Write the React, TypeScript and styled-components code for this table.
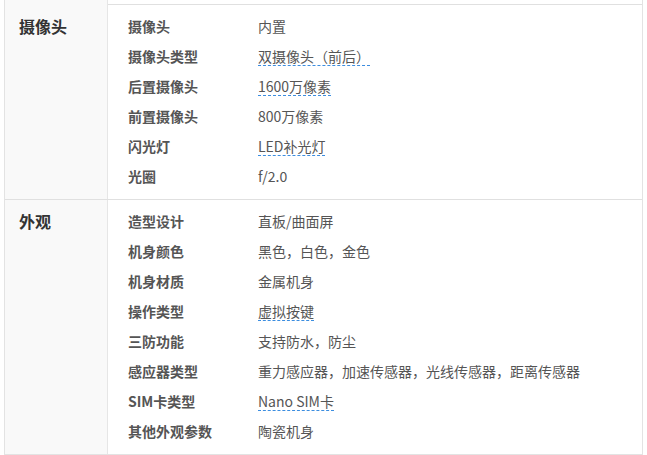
import React from 'react';
import styled, { createGlobalStyle } from 'styled-components';

interface ParamRow {
  label: string,
  value: string,
  tip?: boolean
}

interface ParamGroup {
  title: string,
  rows: ParamRow[]
}

const GlobalStyle = createGlobalStyle`
  html, body {
    margin: 0;
    padding: 0;
    background: #fff;
  }
  body {
    font-family: "Noto Sans CJK SC", "Noto Sans", "Liberation Sans", sans-serif;
  }
`

const Page = styled.div`
  width: 647px;
  height: 455px;
  overflow: hidden;
  padding-left: 4px;
  box-sizing: border-box;
`

const Table = styled.div`
  width: 639px;
  border-left: 1px solid #e3e3e3;
  border-right: 1px solid #e3e3e3;
  border-bottom: 1px solid #e3e3e3;
  box-sizing: border-box;
`

const Section = styled.div<{ $stub?: boolean }>`
  display: grid;
  grid-template-columns: 103px 1fr;
  border-top: ${p => p.$stub ? 'none' : '1px solid #e0e0e0'};
  height: ${p => p.$stub ? '4px' : 'auto'};
`

const Head = styled.div`
  background: #f9f9f9;
  border-right: 1px solid #e6e6e6;
  padding: 6px 0 0 14px;
  font-size: 16px;
  font-weight: bold;
  color: #333;
  line-height: 30px;
`

const Body = styled.div`
  padding: 6px 0 8px 20px;
`

const Row = styled.div`
  display: grid;
  grid-template-columns: 130px 1fr;
  height: 30px;
  align-items: center;
  font-size: 14px;
  color: #555;
`

const Label = styled.div`
  font-weight: bold;
  color: #555;
`

const Value = styled.div`
  color: #555;
`

const Tip = styled.span`
  display: inline-block;
  line-height: 18px;
  border-bottom: 1px dashed #3b8de0;
`

const groups: ParamGroup[] = [
  {
    title: '摄像头',
    rows: [
      { label: '摄像头', value: '内置' },
      { label: '摄像头类型', value: '双摄像头（前后）', tip: true },
      { label: '后置摄像头', value: '1600万像素', tip: true },
      { label: '前置摄像头', value: '800万像素' },
      { label: '闪光灯', value: 'LED补光灯', tip: true },
      { label: '光圈', value: 'f/2.0' },
    ]
  },
  {
    title: '外观',
    rows: [
      { label: '造型设计', value: '直板/曲面屏' },
      { label: '机身颜色', value: '黑色，白色，金色' },
      { label: '机身材质', value: '金属机身' },
      { label: '操作类型', value: '虚拟按键', tip: true },
      { label: '三防功能', value: '支持防水，防尘' },
      { label: '感应器类型', value: '重力感应器，加速传感器，光线传感器，距离传感器' },
      { label: 'SIM卡类型', value: 'Nano SIM卡', tip: true },
      { label: '其他外观参数', value: '陶瓷机身' },
    ]
  }
]

function App() {
  return (
    <Page>
      <GlobalStyle />
      <Table>
        {/* tail of the group above, cut off by the screenshot */}
        <Section $stub>
          <Head />
          <div />
        </Section>
        {groups.map(g => (
          <Section key={g.title}>
            <Head>{g.title}</Head>
            <Body>
              {g.rows.map(r => (
                <Row key={r.label}>
                  <Label>{r.label}</Label>
                  <Value>{r.tip ? <Tip>{r.value}</Tip> : r.value}</Value>
                </Row>
              ))}
            </Body>
          </Section>
        ))}
      </Table>
    </Page>
  );
}

export default App;
